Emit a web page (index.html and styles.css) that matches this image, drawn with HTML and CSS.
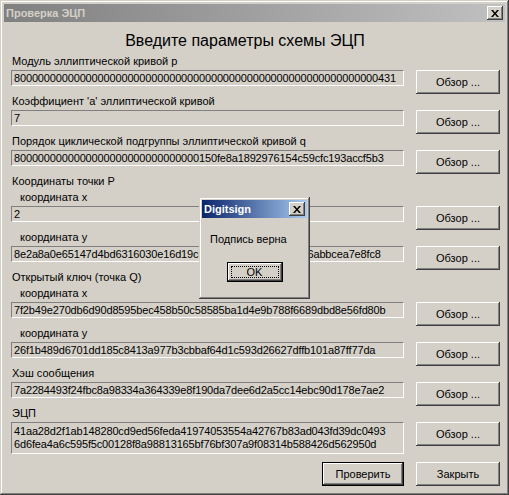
FILE: index.html
```html
<!DOCTYPE html>
<html lang="ru">
<head>
<meta charset="utf-8">
<title>Проверка ЭЦП</title>
<link rel="stylesheet" href="styles.css">
</head>
<body>
<div class="window">
  <div class="titlebar inactive">
    <span class="title">Проверка ЭЦП</span>
    <span class="caption-btn"><svg width="8" height="7" viewBox="0 0 8 7"><path d="M0 0H2L4 2.5L6 0H8L5 3.5L8 7H6L4 4.5L2 7H0L3 3.5Z" fill="#000"/></svg></span>
  </div>
  <div class="content">
    <h1 class="heading">Введите параметры схемы ЭЦП</h1>

    <div class="label">Модуль эллиптической кривой p</div>
    <div class="row"><div class="input">8000000000000000000000000000000000000000000000000000000000000431</div><button class="btn">Обзор ...</button></div>

    <div class="label">Коэффициент 'a' эллиптической кривой</div>
    <div class="row"><div class="input">7</div><button class="btn">Обзор ...</button></div>

    <div class="label">Порядок циклической подгруппы эллиптической кривой q</div>
    <div class="row"><div class="input">8000000000000000000000000000000150fe8a1892976154c59cfc193accf5b3</div><button class="btn">Обзор ...</button></div>

    <div class="label group">Координаты точки P</div>
    <div class="label sub">координата x</div>
    <div class="row"><div class="input">2</div><button class="btn">Обзор ...</button></div>
    <div class="label sub">координата y</div>
    <div class="row"><div class="input">8e2a8a0e65147d4bd6316030e16d19c85c97f0a9ca267122b96abbcea7e8fc8</div><button class="btn">Обзор ...</button></div>

    <div class="label group">Открытый ключ (точка Q)</div>
    <div class="label sub">координата x</div>
    <div class="row"><div class="input">7f2b49e270db6d90d8595bec458b50c58585ba1d4e9b788f6689dbd8e56fd80b</div><button class="btn">Обзор ...</button></div>
    <div class="label sub">координата y</div>
    <div class="row"><div class="input">26f1b489d6701dd185c8413a977b3cbbaf64d1c593d26627dffb101a87ff77da</div><button class="btn">Обзор ...</button></div>

    <div class="label">Хэш сообщения</div>
    <div class="row"><div class="input">7a2284493f24fbc8a98334a364339e8f190da7dee6d2a5cc14ebc90d178e7ae2</div><button class="btn">Обзор ...</button></div>

    <div class="label">ЭЦП</div>
    <div class="row"><div class="input multi">41aa28d2f1ab148280cd9ed56feda41974053554a42767b83ad043fd39dc0493<br>6d6fea4a6c595f5c00128f8a98813165bf76bf307a9f08314b588426d562950d</div><button class="btn">Обзор ...</button></div>

    <div class="actions">
      <button class="btn default">Проверить</button>
      <button class="btn">Закрыть</button>
    </div>
  </div>

  <div class="msgbox">
    <div class="titlebar active">
      <span class="title">Digitsign</span>
      <span class="caption-btn"><svg width="8" height="7" viewBox="0 0 8 7"><path d="M0 0H2L4 2.5L6 0H8L5 3.5L8 7H6L4 4.5L2 7H0L3 3.5Z" fill="#000"/></svg></span>
    </div>
    <div class="msg-text">Подпись верна</div>
    <div class="msg-actions"><button class="btn default ok">OK</button></div>
  </div>
</div>
</body>
</html>
```
FILE: styles.css
```css
html, body {
  margin: 0;
  padding: 0;
  background: #d4d0c8;
}
body {
  font-family: "Liberation Sans", Arial, sans-serif;
  font-size: 11px;
  color: #000;
}
.window {
  position: relative;
  width: 509px;
  height: 495px;
  box-sizing: border-box;
  padding: 4px;
  background: #d4d0c8;
  box-shadow: inset -1px -1px #404040, inset 1px 1px #d4d0c8, inset -2px -2px #808080, inset 2px 2px #fff;
}
.titlebar {
  height: 18px;
  display: flex;
  align-items: center;
  padding: 0 2px 0 2px;
}
.titlebar.inactive {
  background: linear-gradient(to right, #808080, #c0c0c0);
}
.titlebar.active {
  background: linear-gradient(to right, #0a246a, #a6caf0);
}
.title {
  font-weight: bold;
  font-size: 11px;
  line-height: 13px;
}
.inactive .title { color: #d4d0c8; }
.active .title { color: #fff; }
.caption-btn {
  margin-left: auto;
  width: 16px;
  height: 14px;
  background: #d4d0c8;
  display: flex;
  align-items: center;
  justify-content: center;
  box-shadow: inset -1px -1px #404040, inset 1px 1px #fff, inset -2px -2px #808080, inset 2px 2px #d4d0c8;
}
.content {
  padding: 9px 5px 0 7px;
}
.heading {
  margin: 0 21px 4px 0;
  font-size: 16px;
  line-height: 20px;
  font-weight: normal;
  text-align: center;
}
.label {
  height: 13px;
  line-height: 13px;
  margin-bottom: 2px;
  padding-left: 1px;
  white-space: nowrap;
}
.label.group { margin-bottom: 3px; }
.label.sub { padding-left: 9px; }
.row {
  display: flex;
  align-items: flex-start;
  gap: 12px;
  margin-bottom: 1px;
}
.input {
  width: 393px;
  height: 16px;
  box-sizing: border-box;
  border-top: 1px solid #808080;
  border-left: 1px solid #808080;
  border-bottom: 1px solid #fff;
  border-right: 1px solid #fff;
  padding: 0 2px;
  line-height: 14px;
  white-space: nowrap;
  overflow: hidden;
  letter-spacing: -0.15px;
}
.input.multi {
  height: 32px;
  line-height: 13px;
  padding-top: 2px;
}
.btn {
  width: 84px;
  height: 24px;
  padding: 0;
  border: none;
  background: #d4d0c8;
  font-family: "Liberation Sans", Arial, sans-serif;
  font-size: 11px;
  color: #000;
  box-shadow: inset -1px -1px #404040, inset 1px 1px #fff, inset -2px -2px #808080, inset 2px 2px #d4d0c8;
}
.btn.default {
  width: 82px;
  border: 1px solid #000;
}
.actions {
  display: flex;
  justify-content: flex-end;
  gap: 12px;
  margin-top: 8px;
}
.msgbox {
  position: absolute;
  left: 199px;
  top: 197px;
  width: 111px;
  height: 102px;
  box-sizing: border-box;
  padding: 3px;
  background: #d4d0c8;
  box-shadow: inset -1px -1px #404040, inset 1px 1px #d4d0c8, inset -2px -2px #808080, inset 2px 2px #fff;
}
.msg-text {
  margin: 15px 0 0 8px;
  line-height: 13px;
  white-space: nowrap;
}
.msg-actions {
  display: flex;
  justify-content: center;
  margin-top: 16px;
}
.btn.ok {
  width: 56px;
  height: 20px;
  outline: 1px dotted #000;
  outline-offset: -5px;
}
```
